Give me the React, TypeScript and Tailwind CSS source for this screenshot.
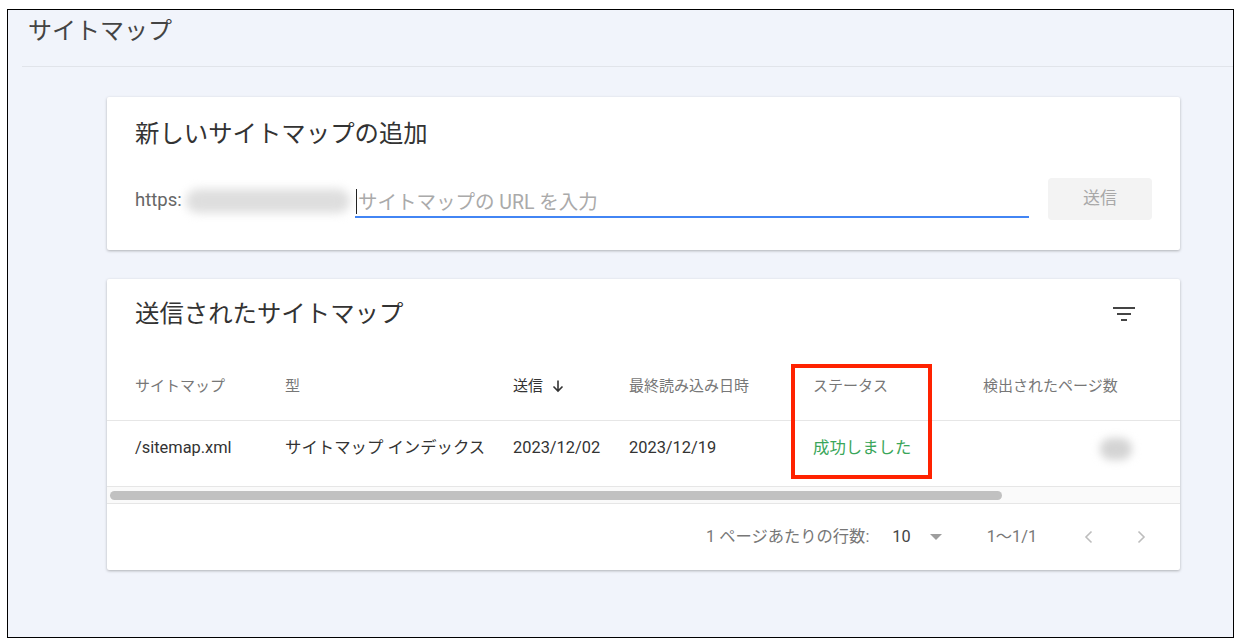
import React from "react";

const font = { fontFamily: 'Roboto, "Noto Sans CJK JP", sans-serif' };

function FilterIcon() {
  return (
    <svg width="22" height="16" viewBox="0 0 22 16" className="text-[#444]">
      <path d="M0 1h22v2H0zM4 7h14v2H4zM8 13h6v2H8z" fill="currentColor" />
    </svg>
  );
}

function Chevron({ dir }: { dir: "left" | "right" }) {
  return (
    <svg width="20" height="20" viewBox="0 0 20 20">
      <path
        d={dir === "left" ? "M12.5 4.5 7 10l5.5 5.5" : "M7.5 4.5 13 10l-5.5 5.5"}
        fill="none"
        stroke="#bdbdbd"
        strokeWidth="1.6"
      />
    </svg>
  );
}

export default function App() {
  return (
    <div className="w-[1240px] h-[643px] bg-white pt-[9px] pl-[7px]" style={font}>
      <div className="w-[1227px] h-[629px] border border-black bg-[#f1f4fb] flex flex-col">
        <div className="ml-[14px] h-[57px] border-b border-[#e1e4ea] pl-[6px] pt-[5px]">
          <div className="text-[24px] leading-[32px] text-[#444]">サイトマップ</div>
        </div>

        <div className="ml-[99px] w-[1073px] mt-[30px] flex flex-col">
          {/* Card 1 */}
          <div className="bg-white shadow-[0_1px_3px_rgba(0,0,0,0.28)] rounded-[2px] px-[28px] pt-[22px] pb-[30px]">
            <div className="text-[24.4px] leading-[30px] text-[#333]">新しいサイトマップの追加</div>
            <div className="mt-[29px] h-[42px] flex items-center">
              <div className="w-[220px] h-[42px] flex items-center">
                <span className="text-[18.5px] text-[#666] pt-[4px]">https:</span>
                <div className="w-[164px] h-[24px] ml-[4px] mt-[4px] rounded-full bg-[#dedede] blur-[5px]" />
              </div>
              <div className="w-[674px] h-[32px] mt-[6px] relative flex items-center border-b-2 border-[#4285f4]">
                <div className="absolute left-[1px] top-[3px] w-[1px] h-[25px] bg-[#222]" />
                <span className="pl-[3px] text-[19.5px] text-[#aaa] pt-[4px]">サイトマップの URL を入力</span>
              </div>
              <div className="ml-[19px] w-[104px] h-[42px] rounded-[4px] bg-[#f3f3f3] flex items-center justify-center text-[17px] text-[#a8a8a8]">
                送信
              </div>
            </div>
          </div>

          {/* Card 2 */}
          <div className="mt-[29px] bg-white shadow-[0_1px_3px_rgba(0,0,0,0.28)] rounded-[2px] relative">
            <div className="pl-[28px] pr-[45px] pt-[20px] flex items-center justify-between">
              <div className="text-[24.4px] leading-[30px] text-[#333]">送信されたサイトマップ</div>
              <FilterIcon />
            </div>
            <div className="grid grid-cols-[150px_228px_116px_184px_170px_1fr] pl-[28px] pt-[47px] pb-[24px] border-b border-[#e6e6e6] text-[15px] leading-[20px] text-[#777]">
              <div>サイトマップ</div>
              <div>型</div>
              <div className="text-[#333] flex items-center gap-[8px]">
                送信
                <svg width="14" height="14" viewBox="0 0 14 14">
                  <path d="M7 1.5v10M2.5 7.5 7 12l4.5-4.5" fill="none" stroke="#333" strokeWidth="1.6" />
                </svg>
              </div>
              <div>最終読み込み日時</div>
              <div>ステータス</div>
              <div>検出されたページ数</div>
            </div>
            <div className="grid grid-cols-[150px_228px_116px_184px_170px_1fr] pl-[28px] h-[66px] pt-[17px] border-b border-[#e6e6e6] text-[16.4px] leading-[20px] text-[#333]">
              <div>/sitemap.xml</div>
              <div>サイトマップ インデックス</div>
              <div>2023/12/02</div>
              <div>2023/12/19</div>
              <div className="text-[#3aa65a]">成功しました</div>
              <div className="flex justify-end pr-[48px]">
                <div className="w-[32px] h-[22px] rounded-full bg-[#d4d4d4] blur-[4px]" />
              </div>
            </div>
            <div className="h-[17px] bg-[#fafafa] border-b border-[#e6e6e6] flex items-center pl-[3px]">
              <div className="w-[892px] h-[9px] rounded-full bg-[#c1c1c1]" />
            </div>
            <div className="h-[66px] flex items-center text-[16.3px] text-[#777]">
              <div className="ml-[599px]">1 ページあたりの行数:</div>
              <div className="ml-[23px] text-[#444]">10</div>
              <svg width="14" height="8" viewBox="0 0 14 8" className="ml-[18px]">
                <path d="M1 1h12L7 7z" fill="#9e9e9e" />
              </svg>
              <div className="ml-[44px]">1〜1/1</div>
              <div className="ml-[42px]"><Chevron dir="left" /></div>
              <div className="ml-[32px]"><Chevron dir="right" /></div>
            </div>

            <div className="absolute left-[684px] top-[85px] w-[141px] h-[115px] border-[4px] border-[#ff2200]" />
          </div>
        </div>
      </div>
    </div>
  );
}
